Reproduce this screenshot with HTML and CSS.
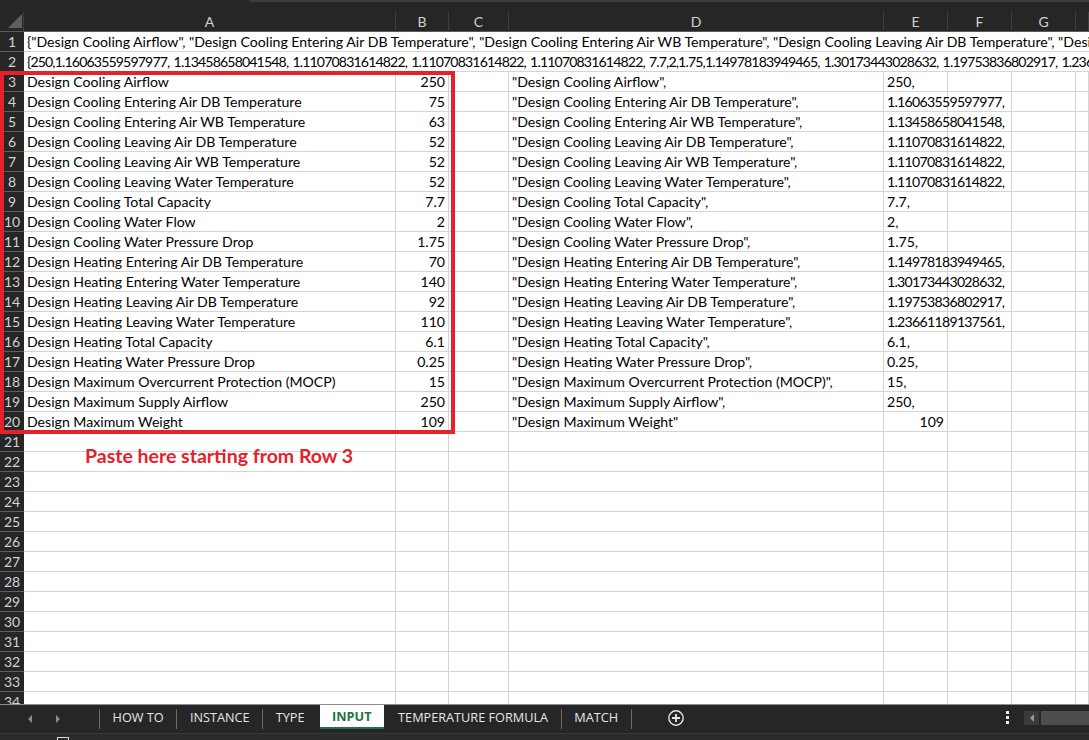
FILE: index.html
```html
<!DOCTYPE html>
<html>
<head>
<meta charset="utf-8">
<link rel="stylesheet" href="styles.css">
</head>
<body>
<div class="app">
  <div class="sheet">
    <div class="topbar"><div class="topbar-light"></div></div>
    <div class="row head">
      <div class="corner"><span class="tri"></span></div>
      <div class="ch">A</div><div class="ch">B</div><div class="ch">C</div><div class="ch">D</div><div class="ch">E</div><div class="ch">F</div><div class="ch">G</div><div class="ch"></div>
    </div>
    <div class="row wide"><div class="rh">1</div><div class="c span">{"Design Cooling Airflow", "Design Cooling Entering Air DB Temperature", "Design Cooling Entering Air WB Temperature", "Design Cooling Leaving Air DB Temperature", "Design Cooling Leaving Air WB Temperature", "Design Cooling Leaving Water Temperature"}</div></div>
    <div class="row wide"><div class="rh">2</div><div class="c span num2">{250,1.16063559597977, 1.13458658041548, 1.11070831614822, 1.11070831614822, 1.11070831614822, 7.7,2,1.75,1.14978183949465, 1.30173443028632, 1.19753836802917, 1.23661189137561, 6.1, 0.25, 15, 250, 109}</div></div>
    <div class="row"><div class="rh">3</div><div class="c">Design Cooling Airflow</div><div class="c r">250</div><div class="c"></div><div class="c">"Design Cooling Airflow",</div><div class="c">250,</div><div class="c"></div><div class="c"></div><div class="c"></div></div>
    <div class="row"><div class="rh">4</div><div class="c">Design Cooling Entering Air DB Temperature</div><div class="c r">75</div><div class="c"></div><div class="c">"Design Cooling Entering Air DB Temperature",</div><div class="c ov num">1.16063559597977,</div><div class="c"></div><div class="c"></div><div class="c"></div></div>
    <div class="row"><div class="rh">5</div><div class="c">Design Cooling Entering Air WB Temperature</div><div class="c r">63</div><div class="c"></div><div class="c">"Design Cooling Entering Air WB Temperature",</div><div class="c ov num">1.13458658041548,</div><div class="c"></div><div class="c"></div><div class="c"></div></div>
    <div class="row"><div class="rh">6</div><div class="c">Design Cooling Leaving Air DB Temperature</div><div class="c r">52</div><div class="c"></div><div class="c">"Design Cooling Leaving Air DB Temperature",</div><div class="c ov num">1.11070831614822,</div><div class="c"></div><div class="c"></div><div class="c"></div></div>
    <div class="row"><div class="rh">7</div><div class="c">Design Cooling Leaving Air WB Temperature</div><div class="c r">52</div><div class="c"></div><div class="c">"Design Cooling Leaving Air WB Temperature",</div><div class="c ov num">1.11070831614822,</div><div class="c"></div><div class="c"></div><div class="c"></div></div>
    <div class="row"><div class="rh">8</div><div class="c">Design Cooling Leaving Water Temperature</div><div class="c r">52</div><div class="c"></div><div class="c">"Design Cooling Leaving Water Temperature",</div><div class="c ov num">1.11070831614822,</div><div class="c"></div><div class="c"></div><div class="c"></div></div>
    <div class="row"><div class="rh">9</div><div class="c">Design Cooling Total Capacity</div><div class="c r">7.7</div><div class="c"></div><div class="c">"Design Cooling Total Capacity",</div><div class="c">7.7,</div><div class="c"></div><div class="c"></div><div class="c"></div></div>
    <div class="row"><div class="rh">10</div><div class="c">Design Cooling Water Flow</div><div class="c r">2</div><div class="c"></div><div class="c">"Design Cooling Water Flow",</div><div class="c">2,</div><div class="c"></div><div class="c"></div><div class="c"></div></div>
    <div class="row"><div class="rh">11</div><div class="c">Design Cooling Water Pressure Drop</div><div class="c r">1.75</div><div class="c"></div><div class="c">"Design Cooling Water Pressure Drop",</div><div class="c">1.75,</div><div class="c"></div><div class="c"></div><div class="c"></div></div>
    <div class="row"><div class="rh">12</div><div class="c">Design Heating Entering Air DB Temperature</div><div class="c r">70</div><div class="c"></div><div class="c">"Design Heating Entering Air DB Temperature",</div><div class="c ov num">1.14978183949465,</div><div class="c"></div><div class="c"></div><div class="c"></div></div>
    <div class="row"><div class="rh">13</div><div class="c">Design Heating Entering Water Temperature</div><div class="c r">140</div><div class="c"></div><div class="c">"Design Heating Entering Water Temperature",</div><div class="c ov num">1.30173443028632,</div><div class="c"></div><div class="c"></div><div class="c"></div></div>
    <div class="row"><div class="rh">14</div><div class="c">Design Heating Leaving Air DB Temperature</div><div class="c r">92</div><div class="c"></div><div class="c">"Design Heating Leaving Air DB Temperature",</div><div class="c ov num">1.19753836802917,</div><div class="c"></div><div class="c"></div><div class="c"></div></div>
    <div class="row"><div class="rh">15</div><div class="c">Design Heating Leaving Water Temperature</div><div class="c r">110</div><div class="c"></div><div class="c">"Design Heating Leaving Water Temperature",</div><div class="c ov num">1.23661189137561,</div><div class="c"></div><div class="c"></div><div class="c"></div></div>
    <div class="row"><div class="rh">16</div><div class="c">Design Heating Total Capacity</div><div class="c r">6.1</div><div class="c"></div><div class="c">"Design Heating Total Capacity",</div><div class="c">6.1,</div><div class="c"></div><div class="c"></div><div class="c"></div></div>
    <div class="row"><div class="rh">17</div><div class="c">Design Heating Water Pressure Drop</div><div class="c r">0.25</div><div class="c"></div><div class="c">"Design Heating Water Pressure Drop",</div><div class="c">0.25,</div><div class="c"></div><div class="c"></div><div class="c"></div></div>
    <div class="row"><div class="rh">18</div><div class="c">Design Maximum Overcurrent Protection (MOCP)</div><div class="c r">15</div><div class="c"></div><div class="c">"Design Maximum Overcurrent Protection (MOCP)",</div><div class="c">15,</div><div class="c"></div><div class="c"></div><div class="c"></div></div>
    <div class="row"><div class="rh">19</div><div class="c">Design Maximum Supply Airflow</div><div class="c r">250</div><div class="c"></div><div class="c">"Design Maximum Supply Airflow",</div><div class="c">250,</div><div class="c"></div><div class="c"></div><div class="c"></div></div>
    <div class="row"><div class="rh">20</div><div class="c">Design Maximum Weight</div><div class="c r">109</div><div class="c"></div><div class="c">"Design Maximum Weight"</div><div class="c r">109</div><div class="c"></div><div class="c"></div><div class="c"></div></div>
    <div class="row"><div class="rh">21</div><div class="c"></div><div class="c"></div><div class="c"></div><div class="c"></div><div class="c"></div><div class="c"></div><div class="c"></div><div class="c"></div></div>
    <div class="row"><div class="rh">22</div><div class="c"></div><div class="c"></div><div class="c"></div><div class="c"></div><div class="c"></div><div class="c"></div><div class="c"></div><div class="c"></div></div>
    <div class="row"><div class="rh">23</div><div class="c"></div><div class="c"></div><div class="c"></div><div class="c"></div><div class="c"></div><div class="c"></div><div class="c"></div><div class="c"></div></div>
    <div class="row"><div class="rh">24</div><div class="c"></div><div class="c"></div><div class="c"></div><div class="c"></div><div class="c"></div><div class="c"></div><div class="c"></div><div class="c"></div></div>
    <div class="row"><div class="rh">25</div><div class="c"></div><div class="c"></div><div class="c"></div><div class="c"></div><div class="c"></div><div class="c"></div><div class="c"></div><div class="c"></div></div>
    <div class="row"><div class="rh">26</div><div class="c"></div><div class="c"></div><div class="c"></div><div class="c"></div><div class="c"></div><div class="c"></div><div class="c"></div><div class="c"></div></div>
    <div class="row"><div class="rh">27</div><div class="c"></div><div class="c"></div><div class="c"></div><div class="c"></div><div class="c"></div><div class="c"></div><div class="c"></div><div class="c"></div></div>
    <div class="row"><div class="rh">28</div><div class="c"></div><div class="c"></div><div class="c"></div><div class="c"></div><div class="c"></div><div class="c"></div><div class="c"></div><div class="c"></div></div>
    <div class="row"><div class="rh">29</div><div class="c"></div><div class="c"></div><div class="c"></div><div class="c"></div><div class="c"></div><div class="c"></div><div class="c"></div><div class="c"></div></div>
    <div class="row"><div class="rh">30</div><div class="c"></div><div class="c"></div><div class="c"></div><div class="c"></div><div class="c"></div><div class="c"></div><div class="c"></div><div class="c"></div></div>
    <div class="row"><div class="rh">31</div><div class="c"></div><div class="c"></div><div class="c"></div><div class="c"></div><div class="c"></div><div class="c"></div><div class="c"></div><div class="c"></div></div>
    <div class="row"><div class="rh">32</div><div class="c"></div><div class="c"></div><div class="c"></div><div class="c"></div><div class="c"></div><div class="c"></div><div class="c"></div><div class="c"></div></div>
    <div class="row"><div class="rh">33</div><div class="c"></div><div class="c"></div><div class="c"></div><div class="c"></div><div class="c"></div><div class="c"></div><div class="c"></div><div class="c"></div></div>
    <div class="row"><div class="rh">34</div><div class="c"></div><div class="c"></div><div class="c"></div><div class="c"></div><div class="c"></div><div class="c"></div><div class="c"></div><div class="c"></div></div>
    <div class="redbox"></div>
    <div class="note">Paste here starting from Row 3</div>
  </div>
  <div class="tabbar">
    <div class="navs">
      <svg class="nav" width="6" height="10" viewBox="0 0 6 10"><path d="M5 1 L1 5 L5 9 Z" fill="#8c8c8c"/></svg>
      <svg class="nav" width="6" height="10" viewBox="0 0 6 10"><path d="M1 1 L5 5 L1 9 Z" fill="#8c8c8c"/></svg>
    </div>
    <div class="sep"></div>
    <div class="tab">HOW TO</div>
    <div class="sep"></div>
    <div class="tab">INSTANCE</div>
    <div class="sep"></div>
    <div class="tab">TYPE</div>
    <div class="tab active">INPUT</div>
    <div class="tab">TEMPERATURE FORMULA</div>
    <div class="sep"></div>
    <div class="tab">MATCH</div>
    <div class="sep"></div>
    <svg class="plus" width="18" height="18" viewBox="0 0 18 18"><circle cx="9" cy="9" r="7.2" fill="none" stroke="#e6e6e6" stroke-width="1.4"/><path d="M9 5 V13 M5 9 H13" stroke="#e6e6e6" stroke-width="1.8"/></svg>
    <div class="spacer"></div>
    <div class="dots"><span></span><span></span><span></span></div>
    <div class="hscroll">
      <div class="hbtn"><svg width="6" height="10" viewBox="0 0 6 10"><path d="M5 1 L1 5 L5 9 Z" fill="#9a9a9a"/></svg></div>
      <div class="htrack"></div>
    </div>
  </div>
  <div class="status"><span class="sq"></span></div>
</div>
</body>
</html>
```

FILE: styles.css
```css
* { box-sizing: border-box; }
html, body { margin: 0; padding: 0; }
body {
  background: #262626;
  width: 1089px;
  height: 740px;
  overflow: hidden;
  font-family: "Lato", "Liberation Sans", sans-serif;
}
.app {
  width: 1089px;
  height: 740px;
  display: flex;
  flex-direction: column;
  background: #262626;
}
.sheet {
  position: relative;
  height: 705px;
  overflow: hidden;
  flex: none;
  border-bottom: 1px solid #8d8d8d;
}
.topbar {
  height: 12px;
  background: #262626;
  position: relative;
}
.topbar-light {
  margin-left: 249px;
  height: 2px;
  background: #3c3c3c;
}
.row {
  display: grid;
  grid-template-columns: 24px 372px 53px 60px 375px 64px 64px 64px 1fr;
  height: 20px;
  width: 1089px;
}
.row.wide {
  grid-template-columns: 24px 1fr;
}
.row.head {
  background: #262626;
  height: 20px;
}
.corner {
  position: relative;
  border-bottom: 1px solid #595959;
  border-right: 1px solid #3e3e3e;
}
.tri {
  position: absolute;
  right: 1px;
  bottom: 3px;
  width: 0;
  height: 0;
  border-left: 14px solid transparent;
  border-bottom: 14px solid #5e5e5e;
}
.ch {
  color: #d2d2d2;
  font-size: 14px;
  text-align: center;
  line-height: 19px;
  border-right: 1px solid #3e3e3e;
  border-bottom: 1px solid #595959;
}
.rh {
  background: #262626;
  color: #d2d2d2;
  font-size: 14px;
  line-height: 19px;
  text-align: center;
  border-bottom: 1px solid #5e5e5e;
}
.c {
  background: #ffffff;
  color: #000;
  font-size: 14.1px;
  line-height: 19px;
  padding: 0 3px;
  white-space: nowrap;
  border-right: 1px solid #d4d4d4;
  border-bottom: 1px solid #d4d4d4;
  overflow: hidden;
}
.c.num { letter-spacing: -0.7px; }
.c.num2 { letter-spacing: -0.85px; word-spacing: 1.4px; }
.c.span { overflow: hidden; border-right: none; }
.c.ov { overflow: visible; position: relative; z-index: 1; }
.c.r { text-align: right; }
.redbox {
  position: absolute;
  left: 0;
  top: 71px;
  width: 455px;
  height: 363px;
  border: 4px solid #e8202a;
  z-index: 3;
}
.note {
  position: absolute;
  left: 85px;
  top: 443px;
  color: #e8202a;
  font-weight: 700;
  font-size: 19.5px;
  line-height: 26px;
  z-index: 3;
  white-space: nowrap;
}
.tabbar {
  height: 28px;
  flex: none;
  display: flex;
  align-items: stretch;
  background: #262626;
  font-family: "Open Sans", "Noto Sans", sans-serif;
  color: #e6e6e6;
  font-size: 12.7px;
}
.navs {
  width: 99px;
  display: flex;
  align-items: center;
  gap: 22px;
  padding-left: 27px;
}
.nav { display: block; }
.sep {
  width: 1px;
  background: #6a6a6a;
  margin: 4px 0 4px;
}
.tab {
  padding: 0 12.6px;
  display: flex;
  align-items: center;
  height: 24px;
  margin-top: 0;
}
.tab.active {
  background: #ffffff;
  color: #217346;
  font-weight: 700;
  border-bottom: 2px solid #217346;
  padding: 0 12px 0 12px;
  margin: 0 2px 0 3px;
  height: 24px;
}
.plus {
  align-self: center;
  margin-left: 35px;
  margin-top: -3px;
}
.spacer { flex: 1; }
.dots {
  width: 4px;
  display: flex;
  flex-direction: column;
  justify-content: center;
  gap: 2px;
  margin-right: 14px;
  margin-top: -3px;
}
.dots span {
  display: block;
  width: 3px;
  height: 3px;
  background: #f0f0f0;
}
.hscroll {
  width: 65px;
  display: flex;
  align-items: center;
  margin-top: -3px;
}
.hbtn {
  width: 15px;
  height: 14px;
  background: #3b3b3b;
  display: flex;
  align-items: center;
  justify-content: center;
}
.htrack {
  flex: 1;
  height: 14px;
  margin-left: 2px;
  background: #4d4d4d;
}
.status {
  flex: 1;
  background: #2b2b2b;
  border-top: 1px solid #3a3a3a;
  position: relative;
}
.sq {
  position: absolute;
  left: 57px;
  top: 3px;
  width: 12px;
  height: 8px;
  border: 1px solid #d8d8d8;
}
```
